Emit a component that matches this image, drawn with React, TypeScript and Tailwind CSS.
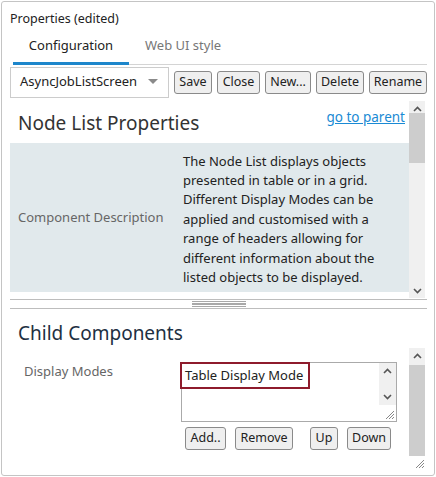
import React from 'react';

const font = { fontFamily: '"Noto Sans", "Open Sans", sans-serif' };

function Btn({ label, w, className = '' }: { label: string; w: string; className?: string }) {
  return (
    <button
      className={`${w} h-[23px] flex items-center justify-center rounded-[3px] border border-[#8a8a8a] bg-[#efefef] text-[12.5px] leading-none text-[#222] ${className}`}
    >
      {label}
    </button>
  );
}

function Chevron({ up }: { up?: boolean }) {
  return (
    <svg width="9" height="6" viewBox="0 0 9 6" className="block">
      <path
        d={up ? 'M1 5 L4.5 1.5 L8 5' : 'M1 1 L4.5 4.5 L8 1'}
        fill="none"
        stroke="#555"
        strokeWidth="1.6"
      />
    </svg>
  );
}

function Grip() {
  return (
    <svg width="11" height="11" viewBox="0 0 11 11" className="block">
      <path d="M10 2 L2 10 M10 5 L5 10 M10 8 L8 10" stroke="#888" strokeWidth="1" />
    </svg>
  );
}

const desc = [
  'The Node List displays objects',
  'presented in table or in a grid.',
  'Different Display Modes can be',
  'applied and customised with a',
  'range of headers allowing for',
  'different information about the',
  'listed objects to be displayed.',
];

export default function App() {
  return (
    <div className="w-[436px] h-[477px] bg-white p-px" style={font}>
      <div className="w-full h-full border border-[#c4c4c4] rounded-[3px] flex flex-col relative">
        <div className="pl-[8px] pt-[8px] text-[12.5px] text-[#222] leading-[18px]">Properties (edited)</div>

        <div className="ml-[11px] mr-[7px] mt-[6px] flex border-b border-[#d4d4d4] h-[31px]">
          <div className="w-[116px] flex items-start justify-center border-b-[3px] border-[#1d86cb] -mb-px text-[13px] text-[#222] pt-[2px]">
            Configuration
          </div>
          <div className="pl-[16px] text-[13px] text-[#777] pt-[2px]">Web UI style</div>
        </div>

        <div className="ml-[8px] mr-[7px] flex items-center gap-[5px] h-[32px] mt-px">
          <div className="w-[159px] h-[31px] border border-[#cccccc] flex items-center justify-between pl-[9px] pr-[10px] text-[13px] text-[#222]">
            <span>AsyncJobListScreen</span>
            <svg width="10" height="6" viewBox="0 0 10 6"><path d="M0 0 L10 0 L5 5 Z" fill="#8a8a8a" /></svg>
          </div>
          <Btn label="Save" w="w-[38px]" />
          <Btn label="Close" w="w-[43px]" />
          <Btn label="New..." w="w-[46px]" />
          <Btn label="Delete" w="w-[48px]" />
          <Btn label="Rename" w="w-[58px]" />
        </div>

        <div className="ml-[8px] mr-[9px] mt-[3px] h-[197px] flex">
          <div className="flex-1 flex flex-col">
            <div className="h-[42px] flex justify-between items-start pl-[8px] pr-[4px]">
              <div className="text-[19px] text-[#333] leading-[26px] pt-[9px]">Node List Properties</div>
              <a className="text-[13.5px] text-[#1a8ad4] underline pt-[7px] leading-[18px]">go to parent</a>
            </div>
            <div className="h-[149px] bg-[#e1e9ec] flex items-center">
              <div className="w-[173px] pl-[8px] text-[13px] text-[#666]">Component Description</div>
              <div className="text-[13px] text-[#222] leading-[19.4px] pt-[4px]">
                {desc.map((l) => (
                  <div key={l}>{l}</div>
                ))}
              </div>
            </div>
          </div>
          <div className="w-[16px] bg-[#f0f0f0] flex flex-col">
            <div className="h-[12px] flex items-center justify-center pt-[4px]"><Chevron up /></div>
            <div className="h-[50px] bg-[#cdcdcd]" />
            <div className="flex-1" />
            <div className="h-[14px] flex items-center justify-center"><Chevron /></div>
          </div>
        </div>

        <div className="ml-[8px] mr-[7px] h-[10px] border-t border-b border-[#bdbdbd] flex items-center justify-center mt-[1px]">
          <div className="w-[54px] h-[6px] flex flex-col justify-between">
            <div className="h-px bg-[#a8a8a8]" />
            <div className="h-px bg-[#a8a8a8]" />
            <div className="h-px bg-[#a8a8a8]" />
            <div className="h-px bg-[#a8a8a8]" />
          </div>
        </div>

        <div className="ml-[8px] mr-[9px] flex-1 flex flex-col">
          <div className="pl-[8px] pt-[11px] text-[19px] text-[#1e3042] leading-[26px]">Child Components</div>
          <div className="flex flex-1 mt-[2px]">
            <div className="flex-1 flex pt-[14px]">
              <div className="w-[171px] pl-[14px] text-[13px] text-[#666] leading-[18px]">Display Modes</div>
              <div className="flex flex-col">
                <div className="w-[216px] h-[60px] border border-[#aaaaaa] flex relative">
                  <div className="flex-1">
                    <div className="w-[130px] h-[27px] border-2 border-[#8e1b2c] -ml-[2px] -mt-px flex items-center pl-[3px] text-[13px] text-[#222]">
                      Table Display Mode
                    </div>
                  </div>
                  <div className="w-[17px] flex flex-col">
                    <div className="h-[42px] bg-[#f0f0f0] flex flex-col justify-between items-center py-[5px]">
                      <Chevron up />
                      <Chevron />
                    </div>
                    <div className="flex-1 flex items-end justify-end pr-px pb-px"><Grip /></div>
                  </div>
                </div>
                <div className="flex items-center mt-[5px] pl-[4px]">
                  <Btn label="Add.." w="w-[41px]" className="h-[22px]" />
                  <Btn label="Remove" w="w-[58px]" className="ml-[9px] h-[22px]" />
                  <Btn label="Up" w="w-[28px]" className="ml-[17px] h-[22px]" />
                  <Btn label="Down" w="w-[44px]" className="ml-[9px] h-[22px]" />
                </div>
              </div>
            </div>
            <div className="w-[16px] flex flex-col">
              <div className="h-[108px] bg-[#f0f0f0] flex flex-col">
                <div className="h-[12px] flex items-center justify-center pt-[4px]"><Chevron up /></div>
                <div className="flex-1 bg-[#cdcdcd] mt-[5px]" />
              </div>
              <div className="flex-1 flex items-start justify-end pt-[2px]"><Grip /></div>
            </div>
          </div>
        </div>
      </div>
    </div>
  );
}
